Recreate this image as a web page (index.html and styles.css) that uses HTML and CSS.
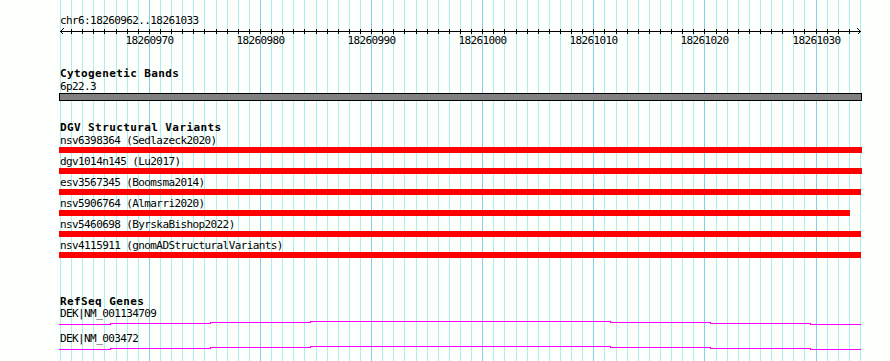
FILE: index.html
```html
<!DOCTYPE html>
<html lang="en">
<head>
  <meta charset="UTF-8" />
  <meta name="viewport" content="width=device-width, initial-scale=1.0"/>
  <title>chr6:18260962..18261033</title>
  <link rel="stylesheet" href="styles.css">
</head>
<body>

<div class="panel">
  <!-- one line per base, drawn by the script below -->
  <svg class="grid" id="grid" width="890" height="361"></svg>

  <div class="tracks">
    <div class="location">chr6:18260962..18261033</div>
    <svg class="ruler" id="ruler" width="890" height="21">
      <line x1="60.5" y1="4.5" x2="860.5" y2="4.5" />
      <polyline points="63.5,1.5 60.5,4.5 63.5,7.5" />
      <polyline points="857.5,1.5 860.5,4.5 857.5,7.5" />
    </svg>

    <section class="track cyto">
      <div class="track-title">Cytogenetic Bands</div>
      <div class="label">6p22.3</div>
      <div class="band"></div>
    </section>

    <section class="track dgv">
      <div class="track-title">DGV Structural Variants</div>
      <div class="feature">
        <div class="label">nsv6398364 (Sedlazeck2020)</div>
        <div class="bar" style="width: 803px"></div>
      </div>
      <div class="feature">
        <div class="label">dgv1014n145 (Lu2017)</div>
        <div class="bar" style="width: 803px"></div>
      </div>
      <div class="feature">
        <div class="label">esv3567345 (Boomsma2014)</div>
        <div class="bar" style="width: 802px"></div>
      </div>
      <div class="feature">
        <div class="label">nsv5906764 (Almarri2020)</div>
        <div class="bar" style="width: 791px"></div>
      </div>
      <div class="feature">
        <div class="label">nsv5460698 (ByrskaBishop2022)</div>
        <div class="bar" style="width: 802px"></div>
      </div>
      <div class="feature">
        <div class="label">nsv4115911 (gnomADStructuralVariants)</div>
        <div class="bar" style="width: 802px"></div>
      </div>
    </section>

    <section class="track genes">
      <div class="track-title">RefSeq Genes</div>
      <div class="label">DEK|NM_001134709</div>
      <svg class="gene" width="890" height="12">
        <polyline points="59,4.5 110,4.5 110,3.5 210,3.5 210,2.5 310,2.5 310,1.5 610,1.5 610,2.5 710,2.5 710,3.5 810,3.5 810,4.5 861,4.5" />
      </svg>
      <div class="label">DEK|NM_003472</div>
      <svg class="gene" width="890" height="12">
        <polyline points="59,4.5 110,4.5 110,3.5 210,3.5 210,2.5 310,2.5 310,1.5 610,1.5 610,2.5 710,2.5 710,3.5 810,3.5 810,4.5 861,4.5" />
      </svg>
    </section>
  </div>
</div>

<script>
  const SVG_NS = 'http://www.w3.org/2000/svg';
  const start = 18260962;
  const bases = 72;
  const left = 60.5;
  const scale = 800 / bases;

  const grid = document.getElementById('grid');
  const ruler = document.getElementById('ruler');

  function addLine(parent, x1, y1, x2, y2, cls) {
    const l = document.createElementNS(SVG_NS, 'line');
    l.setAttribute('x1', x1);
    l.setAttribute('y1', y1);
    l.setAttribute('x2', x2);
    l.setAttribute('y2', y2);
    l.setAttribute('class', cls);
    parent.appendChild(l);
  }

  for (let k = 0; k <= bases; k++) {
    const x = Math.floor(left + k * scale) + 0.5;
    const major = (start + k) % 10 === 0;
    addLine(grid, x, 0, x, 361, major ? 'major' : 'minor');

    if (k > 0 && k < bases) addLine(ruler, x, 2, x, 7, 'tick');

    if (major) {
      const t = document.createElementNS(SVG_NS, 'text');
      t.setAttribute('x', x);
      t.setAttribute('y', 17);
      t.setAttribute('class', 'ruler-label');
      t.textContent = start + k;
      ruler.appendChild(t);
    }
  }
</script>

</body>
</html>
```

FILE: styles.css
```css
body {
  margin: 0;
  background: #fcfffc;
  color: #000;
  font-family: 'DejaVu Sans Mono', 'Liberation Mono', monospace;
}
.panel {
  position: relative;
  width: 890px;
  height: 361px;
  overflow: hidden;
}
.grid {
  position: absolute;
  top: 0;
  left: 0;
  shape-rendering: crispEdges;
}
.grid .minor {
  stroke: #afeeee;
}
.grid .major {
  stroke: #87ceeb;
}
.tracks {
  position: relative;
  padding-top: 14px;
}
.location,
.label {
  padding-left: 60px;
  font-size: 11px;
  letter-spacing: -0.6px;
  line-height: 13px;
  white-space: nowrap;
}
.ruler {
  display: block;
  shape-rendering: crispEdges;
}
.ruler line,
.ruler polyline {
  stroke: #000;
  fill: none;
}
.ruler-label {
  font-family: 'DejaVu Sans Mono', 'Liberation Mono', monospace;
  font-size: 11px;
  letter-spacing: -0.6px;
  text-anchor: middle;
  fill: #000;
}
.track-title {
  padding-left: 60px;
  font-size: 11px;
  font-weight: bold;
  letter-spacing: 0.4px;
  line-height: 12px;
  white-space: nowrap;
}
.cyto {
  margin-top: 20px;
}
.band {
  box-sizing: border-box;
  margin-left: 59px;
  width: 803px;
  height: 8px;
  border: 1px solid #000;
  background: #808080;
}
.dgv {
  margin-top: 21px;
}
.feature {
  margin-bottom: 2px;
}
.bar {
  margin-left: 59px;
  height: 6px;
  background: #ff0000;
}
.genes {
  margin-top: 38px;
}
.genes .track-title {
  line-height: 11px;
}
.gene {
  display: block;
  shape-rendering: crispEdges;
}
.gene polyline {
  stroke: #ff00ff;
  fill: none;
}
```
